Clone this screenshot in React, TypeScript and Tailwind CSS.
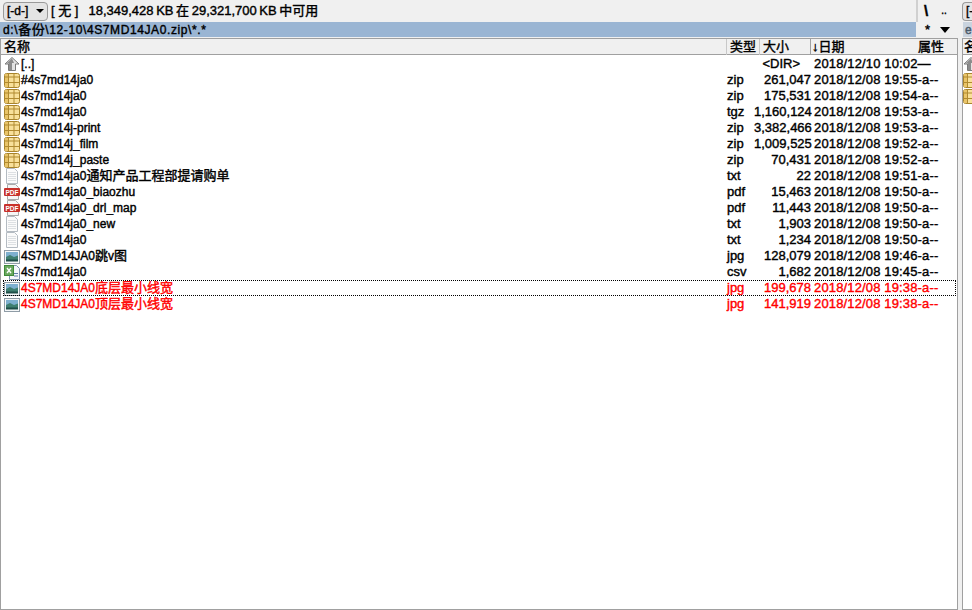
import React from "react";

type Kind = "up" | "zip" | "txt" | "pdf" | "img" | "csv";
type Row = { icon: Kind; name: string; cn?: string; tail?: string; ext: string; size: string; date: string; attr: string; red?: boolean; focus?: boolean; dir?: boolean };

const rows: Row[] = [
  { icon: "up", name: "[..]", ext: "", size: "<DIR>", date: "2018/12/10 10:02", attr: "—", dir: true },
  { icon: "zip", name: "#4s7md14ja0", ext: "zip", size: "261,047", date: "2018/12/08 19:55", attr: "-a--" },
  { icon: "zip", name: "4s7md14ja0", ext: "zip", size: "175,531", date: "2018/12/08 19:54", attr: "-a--" },
  { icon: "zip", name: "4s7md14ja0", ext: "tgz", size: "1,160,124", date: "2018/12/08 19:53", attr: "-a--" },
  { icon: "zip", name: "4s7md14j-print", ext: "zip", size: "3,382,466", date: "2018/12/08 19:53", attr: "-a--" },
  { icon: "zip", name: "4s7md14j_film", ext: "zip", size: "1,009,525", date: "2018/12/08 19:52", attr: "-a--" },
  { icon: "zip", name: "4s7md14j_paste", ext: "zip", size: "70,431", date: "2018/12/08 19:52", attr: "-a--" },
  { icon: "txt", name: "4s7md14ja0", cn: "通知产品工程部提请购单", ext: "txt", size: "22", date: "2018/12/08 19:51", attr: "-a--" },
  { icon: "pdf", name: "4s7md14ja0_biaozhu", ext: "pdf", size: "15,463", date: "2018/12/08 19:50", attr: "-a--" },
  { icon: "pdf", name: "4s7md14ja0_drl_map", ext: "pdf", size: "11,443", date: "2018/12/08 19:50", attr: "-a--" },
  { icon: "txt", name: "4s7md14ja0_new", ext: "txt", size: "1,903", date: "2018/12/08 19:50", attr: "-a--" },
  { icon: "txt", name: "4s7md14ja0", ext: "txt", size: "1,234", date: "2018/12/08 19:50", attr: "-a--" },
  { icon: "img", name: "4S7MD14JA0", cn: "跳", tail: "v", ext: "jpg", size: "128,079", date: "2018/12/08 19:46", attr: "-a--" },
  { icon: "csv", name: "4s7md14ja0", ext: "csv", size: "1,682", date: "2018/12/08 19:45", attr: "-a--" },
  { icon: "img", name: "4S7MD14JA0", cn: "底层最小线宽", ext: "jpg", size: "199,678", date: "2018/12/08 19:38", attr: "-a--", red: true, focus: true },
  { icon: "img", name: "4S7MD14JA0", cn: "顶层最小线宽", ext: "jpg", size: "141,919", date: "2018/12/08 19:38", attr: "-a--", red: true },
];

function Icon({ kind }: { kind: Kind }) {
  if (kind === "up")
    return (
      <svg width="16" height="16" viewBox="0 0 16 16" className="shrink-0">
        <path d="M8 1.5 L15 8 H11.5 V14.5 H4.5 V8 H1 Z" fill="#e2e2e2" stroke="#7a7a7a" strokeWidth="1" />
        <path d="M8 2.5 L2.5 7.5 H5 V14 H8 V7 H10 Z" fill="#8c8c8c" />
      </svg>
    );
  if (kind === "zip")
    return (
      <svg width="16" height="16" viewBox="0 0 16 16" className="shrink-0">
        <rect x="0.5" y="1.5" width="15" height="14" rx="2" fill="#f8e09a" stroke="#a8842c" />
        <rect x="1" y="2" width="3.5" height="13" fill="#e9c468" />
        <path d="M0.5 5 H15.5 M0.5 10.5 H15.5 M4.5 1.5 V15.5 M10 1.5 V15.5" stroke="#b08a30" strokeWidth="1" fill="none" />
      </svg>
    );
  if (kind === "txt")
    return (
      <svg width="16" height="16" viewBox="0 0 16 16" className="shrink-0">
        <path d="M2.5 0.5 H10.5 L13.5 3.5 V15.5 H2.5 Z" fill="#fbfbfb" stroke="#b4bbc2" />
        <path d="M4 4.5 H12 M4 6.5 H12 M4 8.5 H12 M4 10.5 H12 M4 12.5 H12" stroke="#dde0e3" />
      </svg>
    );
  if (kind === "pdf")
    return (
      <svg width="16" height="16" viewBox="0 0 16 16" className="shrink-0">
        <path d="M3.5 0.5 H11.5 L14.5 3.5 V15.5 H3.5 Z" fill="#f6f6f6" stroke="#a9a9a9" />
        <rect x="0" y="4" width="16" height="8" rx="1" fill="#c8312b" />
        <text x="8" y="10.5" textAnchor="middle" fontSize="6.5" fontWeight="700" fill="#fff" className="[-webkit-text-stroke:0px]">PDF</text>
      </svg>
    );
  if (kind === "csv")
    return (
      <svg width="16" height="16" viewBox="0 0 16 16" className="shrink-0">
        <path d="M5.5 1.5 H12.5 L15.5 4.5 V15.5 H5.5 Z" fill="#f4f7fb" stroke="#7f95b0" />
        <path d="M10 9.5 H14 M10 12 H14" stroke="#5c7ba5" />
        <rect x="0.5" y="1.5" width="9" height="10" fill="#6aa85f" stroke="#3f8a3a" />
        <path d="M3 4 L7 9 M7 4 L3 9" stroke="#fff" strokeWidth="1.3" />
      </svg>
    );
  return (
    <svg width="16" height="16" viewBox="0 0 16 16" className="shrink-0">
      <rect x="0.5" y="2.5" width="15" height="13" fill="#f5f7f8" stroke="#8f9ca6" />
      <rect x="2" y="4" width="12" height="5" fill="#7eb0cf" />
      <path d="M2 9 L6 7 L10 9 L14 7.5 V13 H2 Z" fill="#3f7f70" />
      <rect x="2" y="11.5" width="12" height="2" fill="#1f4f48" />
    </svg>
  );
}

function FileRow({ r }: { r: Row }) {
  const color = r.red ? "text-[#ff0000]" : "text-black";
  return (
    <div className={`ml-[2px] mr-px flex h-4 items-center whitespace-nowrap ${color} ${r.focus ? "outline-1 outline-dotted outline-black -outline-offset-1" : ""}`}>
      <div className="flex w-[724px] shrink-0 items-center gap-px pl-px">
        <Icon kind={r.icon} />
        <span>
          {r.name}
          {r.cn && <span className="text-[13px]">{r.cn}</span>}
          {r.tail}
          {r.tail && <span className="text-[13px]">图</span>}
        </span>
      </div>
      <div className="w-[27px] shrink-0 text-[13px]">{r.ext}</div>
      <div className={`w-[57px] shrink-0 text-right text-[13px] ${r.dir ? "pr-[11px]" : ""}`}>{r.size}</div>
      <div className="ml-[3px] shrink-0 text-[13px] tracking-[0.15px]">
        {r.date}
        <span>{r.attr}</span>
      </div>
    </div>
  );
}

export default function App() {
  return (
    <div className="h-[610px] w-[972px] overflow-hidden bg-[#f0f0f0] text-[12px] leading-4 text-black [-webkit-text-stroke:0.4px_currentColor] [font-family:'Liberation_Sans','Noto_Sans_CJK_SC',sans-serif]">
      <div className="flex h-[22px] items-center">
        <div className="flex w-[916px] shrink-0 items-center">
          <div className="ml-[3px] flex h-[19px] w-[45px] items-center justify-between rounded-sm border border-[#9a9a9a] bg-[#e4e4e4] pl-[3px] pr-[3px]">
            <span>[-d-]</span>
            <span className="h-0 w-0 border-x-[4px] border-t-[4px] border-x-transparent border-t-black" />
          </div>
          <span className="ml-[3px] text-[13px]">[ 无 ]</span>
          <span className="ml-[10px] text-[13px] [word-spacing:-1px]">18,349,428 KB 在 29,321,700 KB 中可用</span>
        </div>
        <div className="flex h-full w-[46px] shrink-0 items-center border-l-2 border-[#d0d0d0] pl-[6px]">
          <span className="text-[15px] font-bold">\</span>
          <span className="ml-[13px] text-[10px]">..</span>
        </div>
        <div className="flex h-[19px] flex-1 overflow-hidden rounded-l-sm border border-r-0 border-[#9a9a9a] bg-[#e4e4e4] pl-[3px]">[-</div>
      </div>
      <div className="flex h-[15px]">
        <div className="flex h-[15px] w-[916px] shrink-0 items-center bg-[#9ab5d3] pl-[3px] tracking-[0.6px]">
          <span>d:\<span className="text-[13px]">备份</span>\12-10\4S7MD14JA0.zip\*.*</span>
        </div>
        <div className="flex w-[47px] shrink-0 items-center pl-[9px] text-[13px]">
          <span>*</span>
          <span className="ml-[10px] h-0 w-0 border-x-[5px] border-t-[6px] border-x-transparent border-t-black" />
        </div>
        <div className="h-[15px] flex-1 overflow-hidden bg-[#c9d3de] pl-[2px] text-[#4a5a6a]">e</div>
      </div>
      <div className="flex h-[573px]">
        <div className="mt-px flex w-[958px] shrink-0 flex-col border border-[#a0a0a0] bg-white">
          <div className="flex h-[16px] shrink-0 items-center border-b border-[#a0a0a0] bg-[#f0f0f0] text-[13px]">
            <div className="w-[725px] shrink-0 pl-[3px]">名称</div>
            <div className="w-[33px] shrink-0 border-l border-[#c8c8c8] pl-[3px]">类型</div>
            <div className="w-[51px] shrink-0 border-l border-[#c8c8c8] pl-[3px]">大小</div>
            <div className="w-[107px] shrink-0 border-l border-[#a0a0a0] pl-px">↓日期</div>
            <div className="pl-px">属性</div>
          </div>
          <div className="flex flex-col pt-[1px]">
            {rows.map((r, i) => (
              <FileRow key={i} r={r} />
            ))}
          </div>
        </div>
        <div className="ml-[4px] mt-px flex flex-1 flex-col overflow-hidden border border-r-0 border-[#a0a0a0] bg-white">
          <div className="h-4 overflow-hidden border-b border-[#a0a0a0] bg-[#f0f0f0] pl-[1px] text-[13px]">名</div>
          <div className="flex flex-col pt-[1px]">
            <Icon kind="up" />
            <Icon kind="zip" />
            <Icon kind="zip" />
          </div>
        </div>
      </div>
    </div>
  );
}
